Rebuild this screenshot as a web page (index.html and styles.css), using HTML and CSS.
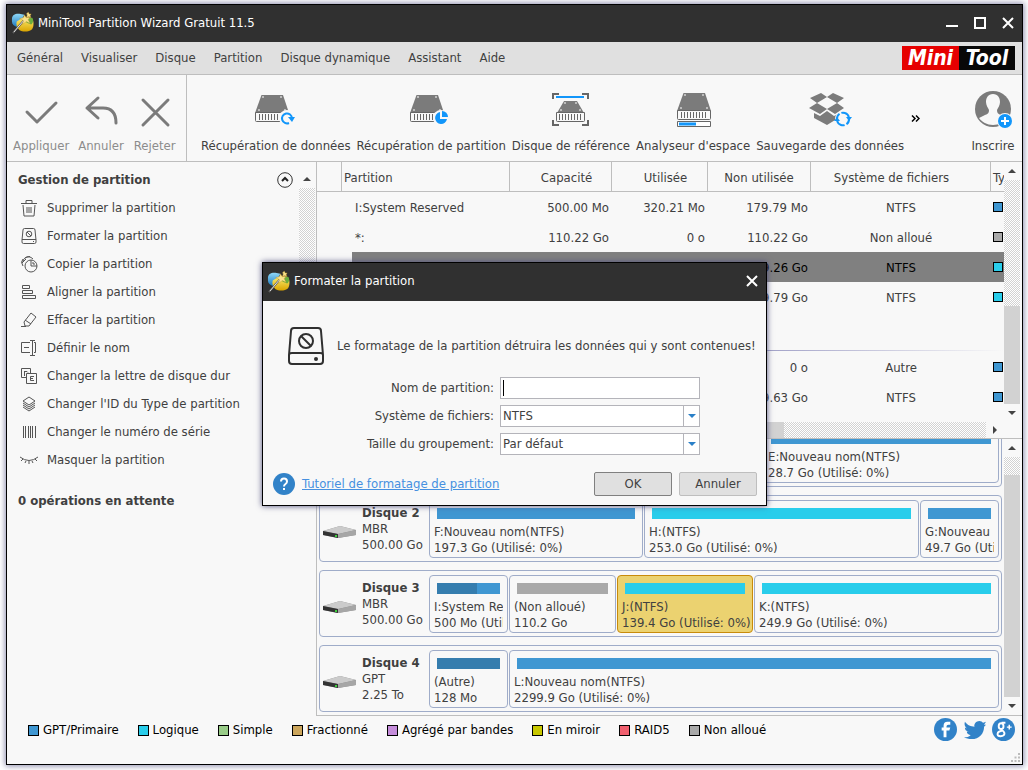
FILE: index.html
```html
<!DOCTYPE html>
<html lang="fr">
<head>
  <meta charset="UTF-8" />
  <meta name="viewport" content="width=device-width, initial-scale=1" />
  <title>MiniTool Partition Wizard Gratuit 11.5</title>
  <link rel="stylesheet" href="styles.css">
</head>
<body>

  <!-- Shared icons -->
  <svg class="defs" aria-hidden="true">
    <defs>
      <linearGradient id="gold" x1="0" y1="0" x2="0" y2="1">
        <stop offset="0" stop-color="#fff27a" />
        <stop offset="1" stop-color="#d9a400" />
      </linearGradient>
      <linearGradient id="sky" x1="0" y1="0" x2="0" y2="1">
        <stop offset="0" stop-color="#8fd8f8" />
        <stop offset="1" stop-color="#1c78bd" />
      </linearGradient>
    </defs>
    <symbol id="wizard" viewBox="0 0 24 24">
      <path d="M1 8c0-4 4-6 9-5l4 1-4 7-3 6c-4-1-6-3-6-6z" fill="url(#sky)" />
      <path d="M6 11l8-5 8 2c2 2 2 8 0 11-3 3-10 3-13 1-3-2-4-6-3-9z" fill="url(#gold)" />
      <path d="M16 8l6-1c2 2 1 6-1 7l-5-2z" fill="#6cae3c" />
      <path d="M2 23L14 9" stroke="#555" stroke-width="2" />
      <path d="M3 22L14 9" stroke="#eee" stroke-width="1" />
      <path d="M14 4l2 3 4-1-2 3 2 4-4-2-4 3 1-4-4-2 4-1zM18 1l1 2 2 0-1 2 1 2-3-1-2 1 1-3-1-1 1-1z" fill="#f8e28c" stroke="#b98b1c" stroke-width=".4" />
    </symbol>
    <symbol id="drive" viewBox="0 0 34 27">
      <path d="M6.500 0h21.500l6 18h-34z" fill="#7b7b7b" />
      <path d="M.5 17.500h33v8q0 1-1 1h-31q-1 0-1-1z" fill="#f8f8f8" stroke="#666" />
      <path d="M4.500 19v6M7.500 19v6M10.500 19v6M13.500 19v6M16.500 19v6M19.500 19v6M22.500 19v6M25.500 19v6M28.500 19v6" stroke="#666" />
      <path d="M8 1v2M26 1v2M3 15h2M29 15h2" stroke="#fff" />
    </symbol>
    <symbol id="drive-low" viewBox="0 0 29 21">
      <path d="M8 0h13l7 12H1z" fill="#7b7b7b" />
      <path d="M.5 11.500h28v8q0 1-1 1h-26q-1 0-1-1z" fill="#f8f8f8" stroke="#666" />
      <path d="M3.500 13v6M6.500 13v6M9.500 13v6M12.500 13v6M15.500 13v6M18.500 13v6M21.500 13v6M24.500 13v6" stroke="#666" />
      <path d="M9 1v2M20 1v2M4 9h2M23 9h2" stroke="#fff" />
    </symbol>
    <symbol id="disk" viewBox="0 0 33 14">
      <path d="M0 6L17 1l16 4v5l-18 3-15-3z" fill="#8a8a8a" />
      <path d="M0 6L17 1l16 4-18 4z" fill="#cbcbcb" />
      <path d="M0 6l15 3v4L0 10z" fill="#333" />
      <path d="M15 9l18-4v5l-18 3z" fill="#a6a6a6" />
      <path d="M12 10h2v2h-2z" fill="#3bd03b" />
    </symbol>
    <symbol id="format" viewBox="0 0 36 38">
      <g fill="none" stroke="currentColor" stroke-width="2">
        <path d="M1 28L3 4q0-3 3-3h24q3 0 3 3l2 24v6q0 3-3 3H4q-3 0-3-3v-6q0-2 3-2h28q3 0 3 2" />
        <circle cx="18" cy="14" r="7" />
        <path d="M13 9l10 10" />
      </g>
      <circle cx="28" cy="32" r="2" fill="currentColor" />
    </symbol>
    <symbol id="tri-up" viewBox="0 0 8 8"><path d="M4 2l4 4H0z" fill="#444" /></symbol>
    <symbol id="tri-down" viewBox="0 0 8 8"><path d="M0 2h8L4 6z" fill="#444" /></symbol>
    <symbol id="tri-right" viewBox="0 0 8 8"><path d="M2 0l4 4-4 4z" fill="#444" /></symbol>
    <symbol id="close" viewBox="0 0 12 12"><path d="M1 1l10 10M11 1L1 11" stroke="#fff" stroke-width="2" /></symbol>
  </svg>

  <div class="window">

    <!-- Title bar -->
    <header class="titlebar">
      <svg class="app-icon"><use href="#wizard" /></svg>
      <h1>MiniTool Partition Wizard Gratuit 11.5</h1>
      <div class="window-buttons">
        <button aria-label="Réduire"><svg viewBox="0 0 12 12"><path d="M0 9h12" stroke="#fff" stroke-width="2" /></svg></button>
        <button aria-label="Agrandir"><svg viewBox="0 0 12 12"><path d="M1 1h10v10H1z" fill="none" stroke="#fff" stroke-width="2" /></svg></button>
        <button aria-label="Fermer"><svg><use href="#close" /></svg></button>
      </div>
    </header>

    <!-- Menu bar -->
    <nav class="menubar">
      <button>Général</button>
      <button>Visualiser</button>
      <button>Disque</button>
      <button>Partition</button>
      <button>Disque dynamique</button>
      <button>Assistant</button>
      <button>Aide</button>
      <a href="#" class="brand"><span class="brand-mini">Mini</span><span class="brand-tool">Tool</span></a>
    </nav>

    <!-- Toolbar -->
    <div class="toolbar">
      <div class="actions">
        <button disabled>
          <svg viewBox="0 0 44 40"><path d="M8 22l10 10 19-19" fill="none" stroke="#7b7b7b" stroke-width="3" stroke-linecap="round" stroke-linejoin="round" /></svg>
          Appliquer
        </button>
        <button disabled>
          <svg viewBox="0 0 44 40"><path d="M19 8L8 18l11 10M8 18h16q13 0 13 15" fill="none" stroke="#7b7b7b" stroke-width="3" stroke-linecap="round" stroke-linejoin="round" /></svg>
          Annuler
        </button>
        <button disabled>
          <svg viewBox="0 0 44 40"><path d="M10 10l25 25M35 10L10 35" fill="none" stroke="#7b7b7b" stroke-width="3" stroke-linecap="round" /></svg>
          Rejeter
        </button>
      </div>
      <div class="tools">
        <button>
          <svg viewBox="0 0 44 40">
            <use href="#drive" x="1" y="5" width="34" height="27" />
            <circle cx="33" cy="28" r="8" fill="#f8f8f8" />
            <path d="M35 33a5 5 0 1 1 3-5" fill="none" stroke="#1296fa" stroke-width="2" />
            <path d="M34 27h7l-3 5z" fill="#1296fa" />
          </svg>
          Récupération de données
        </button>
        <button>
          <svg viewBox="0 0 44 40">
            <use href="#drive" x="1" y="5" width="34" height="27" />
            <circle cx="32" cy="28" r="8" fill="#f8f8f8" />
            <path d="M31 22v7h7a6 6 0 1 1-7-7z" fill="#1296fa" />
            <path d="M33 21v6h6a6 6 0 0 0-6-6z" fill="#1296fa" />
          </svg>
          Récupération de partition
        </button>
        <button>
          <svg viewBox="0 0 44 40">
            <path d="M4 9V4h6M33 4h6v5M4 30v5h6M33 35h6v-5" fill="none" stroke="#666" stroke-width="2" />
            <path d="M7 7h28" stroke="#1296fa" stroke-width="2" />
            <use href="#drive-low" x="7" y="11" width="29" height="21" />
          </svg>
          Disque de référence
        </button>
        <button>
          <svg viewBox="0 0 44 40">
            <use href="#drive" x="6" y="3" width="34" height="27" />
            <path d="M6.500 31.500h33v5h-33z" fill="#fff" stroke="#666" />
            <path d="M8 34h17" stroke="#1296fa" stroke-width="3" />
          </svg>
          Analyseur d'espace
        </button>
        <button>
          <svg viewBox="0 0 44 40">
            <g fill="#7b7b7b" transform="translate(1 0)">
              <path d="M12 3l6 4-10 6-7-5zM24 3l11 5-7 5-10-6zM0 18l8-5 10 6-7 5zM18 19l10-6 7 5-9 6z" />
              <path d="M5 23l6 3 7-5 7 5 6-3v4l-13 8-13-7z" />
            </g>
            <circle cx="35" cy="29" r="8" fill="#f8f8f8" />
            <path d="M29 29a6 6 0 0 1 8-6M41 29a6 6 0 0 1-8 6M37 23a6 6 0 0 1 4 5M33 35a6 6 0 0 1-4-5" fill="none" stroke="#1296fa" stroke-width="2" stroke-dasharray="6 2" />
            <path d="M38 27h6l-3 4zM26 31h6l-3-4z" fill="#1296fa" />
          </svg>
          Sauvegarde des données
        </button>
        <button class="more" aria-label="Plus d'outils"><svg viewBox="0 0 9 7"><path d="M1 .5l3 3-3 3M5 .5l3 3-3 3" fill="none" stroke="#000" stroke-width="1.500" /></svg></button>
      </div>
      <button class="register">
        <svg viewBox="0 0 44 40">
          <circle cx="22" cy="19" r="18" fill="#7b7b7b" />
          <path d="M22 4c5 0 7 4 7 8 0 3-2 6-3 8 0 3 1 4 4 5l6 3c-4 4-8 7-14 7s-11-3-14-7l6-3c3-1 4-2 4-5-1-2-3-5-3-8 0-4 2-8 7-8z" fill="#f8f8f8" />
          <circle cx="34" cy="31" r="8" fill="#f8f8f8" />
          <circle cx="34" cy="31" r="7" fill="#1296fa" />
          <path d="M34 27v8M30 31h8" stroke="#fff" stroke-width="2" />
        </svg>
        Inscrire
      </button>
    </div>

    <div class="main">

      <!-- Sidebar -->
      <aside class="sidebar">
        <div class="side-scroll">
          <div class="side-content">
            <div class="side-head">
              <h2>Gestion de partition</h2>
              <button aria-label="Replier"><svg viewBox="0 0 16 16"><circle cx="8" cy="8" r="7.300" fill="none" stroke="#333" /><path d="M5 9l3-3 3 3" fill="none" stroke="#222" stroke-width="2" /></svg></button>
            </div>
            <ul>
              <li><button><svg viewBox="0 0 18 18"><path d="M1 4.500h16M6 4V1.500h6V4M3 6l1 11h10l1-11M7 8v6M9 8v6M11 8v6" /></svg>Supprimer la partition</button></li>
              <li><button><svg viewBox="0 0 18 18"><path d="M2 13L3 3q0-1.500 1.500-1.500h9Q15 1.500 15 3l1 10v2q0 1.500-1.500 1.500h-11Q2 16.500 2 15zM2 12.500h14M13 14.500h1M7 5l4 4" /><circle cx="9" cy="7" r="2.800" /></svg>Formater la partition</button></li>
              <li><button><svg viewBox="0 0 18 18"><circle cx="11" cy="11" r="6" /><path d="M3 11q-3-4 0-7M3 7q0-5 7-5.500M2 8l4-4M5 3q4-3 8 1M11 5v6h6M13 7v2h2" /></svg>Copier la partition</button></li>
              <li><button><svg viewBox="0 0 18 18"><path d="M2.500 2.500h7v3h-7zM2.500 7.500h10v3h-10zM2.500 12.500h13v3h-13z" /></svg>Aligner la partition</button></li>
              <li><button><svg viewBox="0 0 18 18"><path d="M4 11l7-9 5 4-7 9H5l-1-4M5 9l6 4M1 15.500h5" /></svg>Effacer la partition</button></li>
              <li><button><svg viewBox="0 0 18 18"><path d="M10 3.500H1.500v10H10M4 8.500h5M14 3.500h1.500v10H14M12.500 2v14M10 1.500h5M10 16.500h5" /></svg>Définir le nom</button></li>
              <li><button><svg viewBox="0 0 18 18"><path d="M6 10.500H1.500v-9h9V6M6.500 6.500h10v10h-10zM4.500 4v5M4 4.500h3l1 1M14 9.500h-3.500v4H14M10 11.500h3" /></svg>Changer la lettre de disque dur</button></li>
              <li><button><svg viewBox="0 0 18 18"><path d="M9 2l6 4-6 4-6-4zM3 8l6 4 6-4M3 10l6 4 6-4M3 12l6 4 6-4" /></svg>Changer l'ID du Type de partition</button></li>
              <li><button><svg viewBox="0 0 18 18"><path d="M3.500 3v12M5.500 3v12M8.500 3v12M10.500 3v12M12.500 3v12M15.500 3v12" /></svg>Changer le numéro de série</button></li>
              <li><button><svg viewBox="0 0 18 18"><path d="M0 6q9 7 18 0M1 10l2-2M5 12l1-2M9 13v-3M13 12l-1-2M17 10l-2-2" /></svg>Masquer la partition</button></li>
            </ul>
          </div>
          <div class="vscroll">
            <button aria-label="Haut"><svg><use href="#tri-up" /></svg></button>
            <div class="track"></div>
          </div>
        </div>
        <h2 class="pending">0 opérations en attente</h2>
      </aside>

      <section class="content">

        <!-- Partition list -->
        <div class="pane list">
          <div class="list-main">
            <div class="table-wrap">
              <table>
                <colgroup>
                  <col class="c-tree"><col class="c-name"><col class="c-cap"><col class="c-used"><col class="c-free"><col class="c-fs"><col class="c-type">
                </colgroup>
                <thead>
                  <tr><th></th><th class="first">Partition</th><th class="size">Capacité</th><th class="size">Utilisée</th><th>Non utilisée</th><th class="fs">Système de fichiers</th><th class="first">Type</th></tr>
                </thead>
                <tbody>
                  <tr><td></td><td>I:System Reserved</td><td>500.00 Mo</td><td>320.21 Mo</td><td>179.79 Mo</td><td>NTFS</td><td><i class="swatch primary"></i></td></tr>
                  <tr><td></td><td>*:</td><td>110.22 Go</td><td>0 o</td><td>110.22 Go</td><td>Non alloué</td><td><i class="swatch unalloc"></i></td></tr>
                  <tr class="selected"><td></td><td></td><td></td><td></td><td>139.26 Go</td><td>NTFS</td><td><i class="swatch logical"></i></td></tr>
                  <tr><td></td><td></td><td></td><td></td><td>249.79 Go</td><td>NTFS</td><td><i class="swatch logical"></i></td></tr>
                  <tr class="group"><td colspan="7"></td></tr>
                  <tr><td></td><td></td><td></td><td></td><td>0 o</td><td>Autre</td><td><i class="swatch primary"></i></td></tr>
                  <tr><td></td><td></td><td></td><td></td><td>2299.63 Go</td><td>NTFS</td><td><i class="swatch primary"></i></td></tr>
                </tbody>
              </table>
            </div>
            <div class="hscroll">
              <div class="thumb"></div>
              <div class="track"></div>
              <button aria-label="Droite"><svg><use href="#tri-right" /></svg></button>
            </div>
          </div>
          <div class="vscroll">
            <button aria-label="Haut"><svg><use href="#tri-up" /></svg></button>
            <div class="track"></div>
            <div class="thumb list-thumb"></div>
            <button aria-label="Bas"><svg><use href="#tri-down" /></svg></button>
          </div>
        </div>

        <!-- Disk map -->
        <div class="pane map">
          <div class="disks">
            <div class="disk">
              <div class="disk-info"><svg><use href="#disk" /></svg></div>
              <div class="parts">
                <div class="part" style="flex-grow: 323"></div>
                <div class="part" style="flex-grow: 226"><div class="bar primary"></div><p>E:Nouveau nom(NTFS)</p><p>28.7 Go (Utilisé: 0%)</p></div>
              </div>
            </div>
            <div class="disk">
              <div class="disk-info"><svg><use href="#disk" /></svg><div><b>Disque 2</b><p>MBR</p><p>500.00 Go</p></div></div>
              <div class="parts">
                <div class="part" style="flex-grow: 204"><div class="bar primary"></div><p>F:Nouveau nom(NTFS)</p><p>197.3 Go (Utilisé: 0%)</p></div>
                <div class="part" style="flex-grow: 265"><div class="bar logical"></div><p>H:(NTFS)</p><p>253.0 Go (Utilisé: 0%)</p></div>
                <div class="part" style="flex-grow: 69"><div class="bar primary"></div><p>G:Nouveau nom(NTFS)</p><p>49.7 Go (Utilisé: 0%)</p></div>
              </div>
            </div>
            <div class="disk">
              <div class="disk-info"><svg><use href="#disk" /></svg><div><b>Disque 3</b><p>MBR</p><p>500.00 Go</p></div></div>
              <div class="parts">
                <div class="part" style="flex-grow: 69"><div class="bar primary"><div class="used" style="width: 64%"></div></div><p>I:System Reserved</p><p>500 Mo (Utilisé: 64%)</p></div>
                <div class="part" style="flex-grow: 97"><div class="bar unalloc"></div><p>(Non alloué)</p><p>110.2 Go</p></div>
                <div class="part active" style="flex-grow: 126"><div class="bar logical"></div><p>J:(NTFS)</p><p>139.4 Go (Utilisé: 0%)</p></div>
                <div class="part" style="flex-grow: 235"><div class="bar logical"></div><p>K:(NTFS)</p><p>249.9 Go (Utilisé: 0%)</p></div>
              </div>
            </div>
            <div class="disk">
              <div class="disk-info"><svg><use href="#disk" /></svg><div><b>Disque 4</b><p>GPT</p><p>2.25 To</p></div></div>
              <div class="parts">
                <div class="part" style="flex-grow: 69"><div class="bar primary"><div class="used" style="width: 100%"></div></div><p>(Autre)</p><p>128 Mo</p></div>
                <div class="part" style="flex-grow: 480"><div class="bar primary"></div><p>L:Nouveau nom(NTFS)</p><p>2299.9 Go (Utilisé: 0%)</p></div>
              </div>
            </div>
          </div>
          <div class="vscroll">
            <button aria-label="Haut"><svg><use href="#tri-up" /></svg></button>
            <div class="track"></div>
            <div class="thumb map-thumb"></div>
            <button aria-label="Bas"><svg><use href="#tri-down" /></svg></button>
          </div>
        </div>
      </section>
    </div>

    <!-- Legend and social links -->
    <footer>
      <ul class="legend">
        <li><i class="swatch primary"></i>GPT/Primaire</li>
        <li><i class="swatch logical"></i>Logique</li>
        <li><i class="swatch simple"></i>Simple</li>
        <li><i class="swatch spanned"></i>Fractionné</li>
        <li><i class="swatch striped"></i>Agrégé par bandes</li>
        <li><i class="swatch mirror"></i>En miroir</li>
        <li><i class="swatch raid"></i>RAID5</li>
        <li><i class="swatch unalloc"></i>Non alloué</li>
      </ul>
      <div class="social">
        <a href="#" aria-label="Facebook"><svg viewBox="0 0 24 24"><circle cx="12" cy="12" r="12" fill="#3182c8" /><path d="M10 20v-7H8v-3h2V8q0-4 4-4h3v3h-2q-2 0-2 2v1h4l-1 3h-3v7z" fill="#fff" /></svg></a>
        <a href="#" aria-label="Twitter"><svg viewBox="0 0 24 24"><path d="M2 4c3 4 6 5 10 5-1-3 2-6 5-6 2 0 3 1 4 2l3-1-2 3 2 0-2 2c0 7-5 13-13 13-3 0-6-1-8-2 3 0 5 0 7-2-3-1-4-2-4-4h2C3 14 2 12 2 10l2 1C2 9 1 7 2 4z" fill="#3182c8" /></svg></a>
        <a href="#" aria-label="Google Plus"><svg viewBox="0 0 24 24"><circle cx="12" cy="12" r="12" fill="#3182c8" /><g fill="none" stroke="#fff" stroke-width="2"><ellipse cx="9.500" cy="8.500" rx="2.500" ry="3" /><path d="M10 5h4M9 12q4 2 4 4 0 3-4 3t-3-3q0-2 5-3" /></g><path d="M18 7v5M15.500 9.500h5" stroke="#fff" stroke-width="1.500" /></svg></a>
      </div>
      <svg class="grip" viewBox="0 0 9 9"><path d="M7 0h2v2H7zM3.500 3.500h2v2h-2zM7 3.500h2v2H7zM0 7h2v2H0zM3.500 7h2v2h-2zM7 7h2v2H7z" fill="#bbb" /></svg>
    </footer>

    <!-- Format dialog -->
    <div class="dialog" role="dialog" aria-labelledby="dialog-title">
      <header class="titlebar">
        <svg class="app-icon"><use href="#wizard" /></svg>
        <h2 id="dialog-title">Formater la partition</h2>
        <div class="window-buttons"><button aria-label="Fermer"><svg><use href="#close" /></svg></button></div>
      </header>
      <form>
        <div class="warning">
          <svg><use href="#format" /></svg>
          <p>Le formatage de la partition détruira les données qui y sont contenues!</p>
        </div>
        <div class="fields">
          <label for="name">Nom de partition:</label>
          <input type="text" id="name" autofocus>
          <label for="fs">Système de fichiers:</label>
          <div class="combo"><select id="fs"><option>NTFS</option><option>FAT32</option></select><span></span></div>
          <label for="cluster">Taille du groupement:</label>
          <div class="combo"><select id="cluster"><option>Par défaut</option></select><span></span></div>
        </div>
        <div class="dialog-foot">
          <svg viewBox="0 0 22 22"><circle cx="11" cy="11" r="11" fill="#3182c8" /><path d="M8 8.500Q8 5.500 11 5.500t3 3q0 1.500-1.500 2.500T11 13.500" fill="none" stroke="#fff" stroke-width="2" /><path d="M10 15h2v2h-2z" fill="#fff" /></svg>
          <a href="#">Tutoriel de formatage de partition</a>
          <button type="button" class="btn default">OK</button>
          <button type="button" class="btn">Annuler</button>
        </div>
      </form>
    </div>
  </div>

</body>
</html>
```
FILE: styles.css
```css
/* Reset */
* {
  margin: 0;
  padding: 0;
  box-sizing: border-box;
}

:root {
  --bg: #f8f8f8;
  --text: #404040;
  --line: #bebebe;
  --primary: #3f97d2;
  --primary-used: #357dae;
  --logical: #29cdeb;
  --unalloc: #a9a9a9;
  --frame: #9facc9;
}

body {
  height: 100vh;
  padding: 4px 5px 5px 6px;
  background: #fff;
  color: var(--text);
  font-family: "DejaVu Sans Condensed", "DejaVu Sans", sans-serif;
  font-size: 13px;
  line-height: 16px;
  overflow: hidden;
}

button,
input,
select {
  font: inherit;
  color: inherit;
  border: none;
  background: none;
}

ul {
  list-style: none;
}

svg {
  display: block;
  flex: none;
}

.defs {
  position: absolute;
  width: 0;
  height: 0;
}

.window {
  position: relative;
  display: flex;
  flex-direction: column;
  height: 100%;
  background: var(--bg);
  border: 1px solid #000;
  box-shadow: 0 0 6px 1px #8c8cac;
}

/* Title bars */
.titlebar {
  display: flex;
  align-items: center;
  gap: 4px;
  height: 37px;
  padding: 0 8px 2px 4px;
  background: #303030;
  color: #fff;
}

.titlebar h1,
.titlebar h2 {
  flex: 1;
  font-size: 13px;
  font-weight: normal;
}

.app-icon {
  width: 23px;
  height: 23px;
}

.window-buttons {
  display: flex;
  gap: 16px;
}

.window-buttons svg {
  width: 12px;
  height: 12px;
}

/* Menu bar */
.menubar {
  display: flex;
  align-items: center;
  gap: 18px;
  height: 33px;
  padding: 0 7px 0 10px;
  background: #e0e0e0;
  border-bottom: 1px solid var(--line);
}

.brand {
  display: flex;
  margin-left: auto;
  color: #fff;
  font-size: 21px;
  font-weight: bold;
  font-style: italic;
  line-height: 24px;
  text-align: center;
  text-decoration: none;
}

.brand-mini {
  width: 57px;
  background: #e60000;
}

.brand-tool {
  width: 56px;
  background: #080808;
}

/* Toolbar */
.toolbar {
  display: flex;
  height: 87px;
  border-bottom: 1px solid var(--line);
}

.toolbar button {
  display: flex;
  flex-direction: column;
  align-items: center;
  gap: 8px;
  padding-top: 15px;
  white-space: nowrap;
}

.toolbar svg {
  width: 44px;
  height: 40px;
}

.actions {
  display: flex;
  gap: 9px;
  width: 180px;
  padding-left: 6px;
  border-right: 1px solid var(--line);
}

.actions button {
  color: #8c8c8c;
}

.tools {
  display: flex;
  flex: 1;
  gap: 6px;
  padding-left: 14px;
}

.toolbar .more {
  padding: 40px 0 0 1px;
}

.toolbar .more svg {
  width: 9px;
  height: 7px;
}

.register {
  padding-right: 7px;
}

/* Main area */
.main {
  display: flex;
  flex: 1;
  min-height: 0;
}

.sidebar {
  width: 310px;
  border-right: 1px solid var(--line);
}

.sidebar h2 {
  font-size: 13px;
}

.side-scroll {
  display: flex;
  height: 314px;
  padding-right: 1px;
}

.side-content {
  flex: 1;
  padding: 4px 6px 0 11px;
}

.side-head {
  display: flex;
  align-items: center;
  justify-content: space-between;
  height: 28px;
}

.side-head svg {
  width: 16px;
  height: 16px;
}

.side-content li button {
  display: flex;
  align-items: center;
  gap: 9px;
  height: 28px;
  padding-left: 2px;
}

.side-content li svg {
  width: 18px;
  height: 18px;
  fill: none;
  stroke: #555;
}

.pending {
  padding: 17px 11px;
}

.content {
  display: flex;
  flex: 1;
  flex-direction: column;
  min-width: 0;
}

.pane {
  display: flex;
  min-height: 0;
  padding-right: 2px;
  border-bottom: 1px solid var(--line);
}

/* Scroll bars */
.vscroll {
  display: flex;
  flex-direction: column;
  width: 16px;
}

.vscroll button {
  display: flex;
  align-items: center;
  justify-content: center;
  height: 18px;
}

.vscroll svg,
.hscroll svg {
  width: 8px;
  height: 8px;
}

.side-scroll .vscroll button {
  height: 26px;
  padding-top: 8px;
}

.list .vscroll {
  padding-bottom: 16px;
}

.track {
  flex: 1;
  background: repeating-conic-gradient(#d2d2d2 0 25%, #fff 0 50%) 0 0 / 2px 2px;
}

.thumb {
  background: #d2d2d2;
}

.list-thumb {
  height: 98px;
}

.map-thumb {
  height: 222px;
}

.hscroll {
  display: flex;
  height: 16px;
}

.hscroll .thumb {
  width: 467px;
}

.hscroll button {
  padding: 0 5px;
}

/* Partition list */
.list {
  height: 277px;
}

.list-main {
  display: flex;
  flex: 1;
  flex-direction: column;
  min-width: 0;
}

.table-wrap {
  flex: 1;
  overflow: hidden;
}

table {
  width: 100%;
  table-layout: fixed;
  border-collapse: separate;
  border-spacing: 0;
}

.c-tree { width: 25px; }
.c-name { width: 168px; }
.c-cap { width: 102px; }
.c-used { width: 96px; }
.c-free { width: 103px; }
.c-type { width: 13px; }

th {
  height: 30px;
  padding-top: 2px;
  font-weight: normal;
  border-right: 1px solid var(--line);
  border-bottom: 1px solid var(--line);
  white-space: nowrap;
  overflow: hidden;
}

th.first {
  padding-left: 2px;
  text-align: left;
}

th.size {
  padding-left: 12px;
}

th.fs {
  padding-right: 18px;
}

th:last-child {
  border-right: none;
}

td {
  height: 30px;
  padding: 2px 3px 0 0;
  text-align: right;
  white-space: nowrap;
}

td:nth-child(2) {
  padding-left: 13px;
  text-align: left;
}

td:nth-child(6) {
  padding-right: 0;
  text-align: center;
}

td:last-child {
  padding: 0 0 0 2px;
}

.selected {
  color: #000;
}

.selected td {
  background: #808080;
}

.selected td:nth-child(1) {
  background: none;
}

.selected td:nth-child(2) {
  background: linear-gradient(90deg, transparent 10px, #808080 10px);
}

.group td {
  height: 40px;
  background: linear-gradient(90deg, #9494c0 60%, var(--bg)) 0 38px / 100% 1px no-repeat;
}

.swatch {
  display: block;
  width: 11px;
  height: 11px;
  border: 1px solid #000;
}

td .swatch {
  width: 10px;
  height: 10px;
}

.primary { background-color: var(--primary); }
.logical { background-color: var(--logical); }
.unalloc { background-color: var(--unalloc); }
.simple { background-color: #99cc88; }
.spanned { background-color: #cca65c; }
.striped { background-color: #c58ddb; }
.mirror { background-color: #c8c800; }
.raid { background-color: #f05f6e; }

/* Disk map */
.map {
  flex: 1;
}

.disks {
  display: flex;
  flex: 1;
  flex-direction: column;
  justify-content: flex-end;
  gap: 8px;
  min-width: 0;
  padding: 0 2px 3px;
  overflow: hidden;
}

.disk {
  display: flex;
  flex: none;
  height: 67px;
  padding: 4px 2px 3px;
  border: 1px solid var(--frame);
  border-radius: 4px;
}

.disk-info {
  display: flex;
  align-items: center;
  gap: 6px;
  width: 107px;
  padding-left: 1px;
}

.disk-info svg {
  width: 33px;
  height: 14px;
  margin-top: 6px;
}

.parts {
  display: flex;
  flex: 1;
  gap: 1px;
  min-width: 0;
}

.part {
  flex: 0 1 0;
  min-width: 0;
  padding: 7px 4px 0;
  border: 1px solid var(--frame);
  border-radius: 4px;
  white-space: nowrap;
  overflow: hidden;
}

.part p {
  overflow: hidden;
}

.part.active {
  background: #ebd270;
  border-color: #c88b0a;
}

.part.active p {
  overflow: visible;
}

.bar {
  height: 11px;
  margin: 0 3px 5px;
}

.used {
  height: 100%;
  background: var(--primary-used);
}

/* Footer */
footer {
  position: relative;
  display: flex;
  align-items: flex-start;
  justify-content: space-between;
  height: 48px;
  padding: 2px 7px 0 21px;
  color: #000;
}

.legend {
  display: flex;
  gap: 19px;
  padding-top: 4px;
}

.legend li {
  display: flex;
  align-items: center;
  gap: 4px;
}

.social {
  display: flex;
  gap: 6px;
}

.social svg {
  width: 23px;
  height: 23px;
}

.grip {
  position: absolute;
  right: 2px;
  bottom: 2px;
  width: 9px;
  height: 9px;
}

/* Format dialog */
.dialog {
  position: absolute;
  top: 257px;
  left: 255px;
  width: 505px;
  background: var(--bg);
  border: 1px solid #000;
  box-shadow: 0 0 6px #50507c;
}

.dialog .titlebar {
  height: 38px;
}

.warning {
  display: flex;
  align-items: center;
  gap: 13px;
  padding: 26px 0 0 25px;
}

.warning svg {
  width: 36px;
  height: 38px;
  color: #303030;
}

.fields {
  display: grid;
  grid-template-columns: 231px 200px;
  gap: 6px;
  align-items: center;
  padding-top: 12px;
}

.fields label {
  text-align: right;
}

.fields input,
.combo {
  display: flex;
  width: 100%;
  height: 22px;
  background: #fff;
  border: 1px solid #b4b4ba;
}

.fields input {
  padding: 0 2px;
  outline: none;
}

.fields input:focus {
  caret-color: transparent;
  background: linear-gradient(#000, #000) 2px 2px / 1px 16px no-repeat #fff;
}

.combo select {
  flex: 1;
  padding: 0 2px;
  appearance: none;
  outline: none;
}

.combo span {
  display: flex;
  align-items: center;
  justify-content: center;
  width: 16px;
  border-left: 1px solid #b4b4ba;
}

.combo span::after {
  content: "";
  border: 4px solid transparent;
  border-top-color: #2a80c8;
  border-bottom: none;
}

.dialog-foot {
  display: flex;
  align-items: center;
  gap: 7px;
  padding: 17px 9px 9px 10px;
}

.dialog-foot svg {
  width: 22px;
  height: 22px;
}

.dialog-foot a {
  flex: 1;
  color: #4690e0;
}

.btn {
  width: 78px;
  height: 24px;
  background: #e0e0e0;
  border: 1px solid #bebebe;
  border-radius: 2px;
}

.btn.default {
  border-color: #808080;
}
```
